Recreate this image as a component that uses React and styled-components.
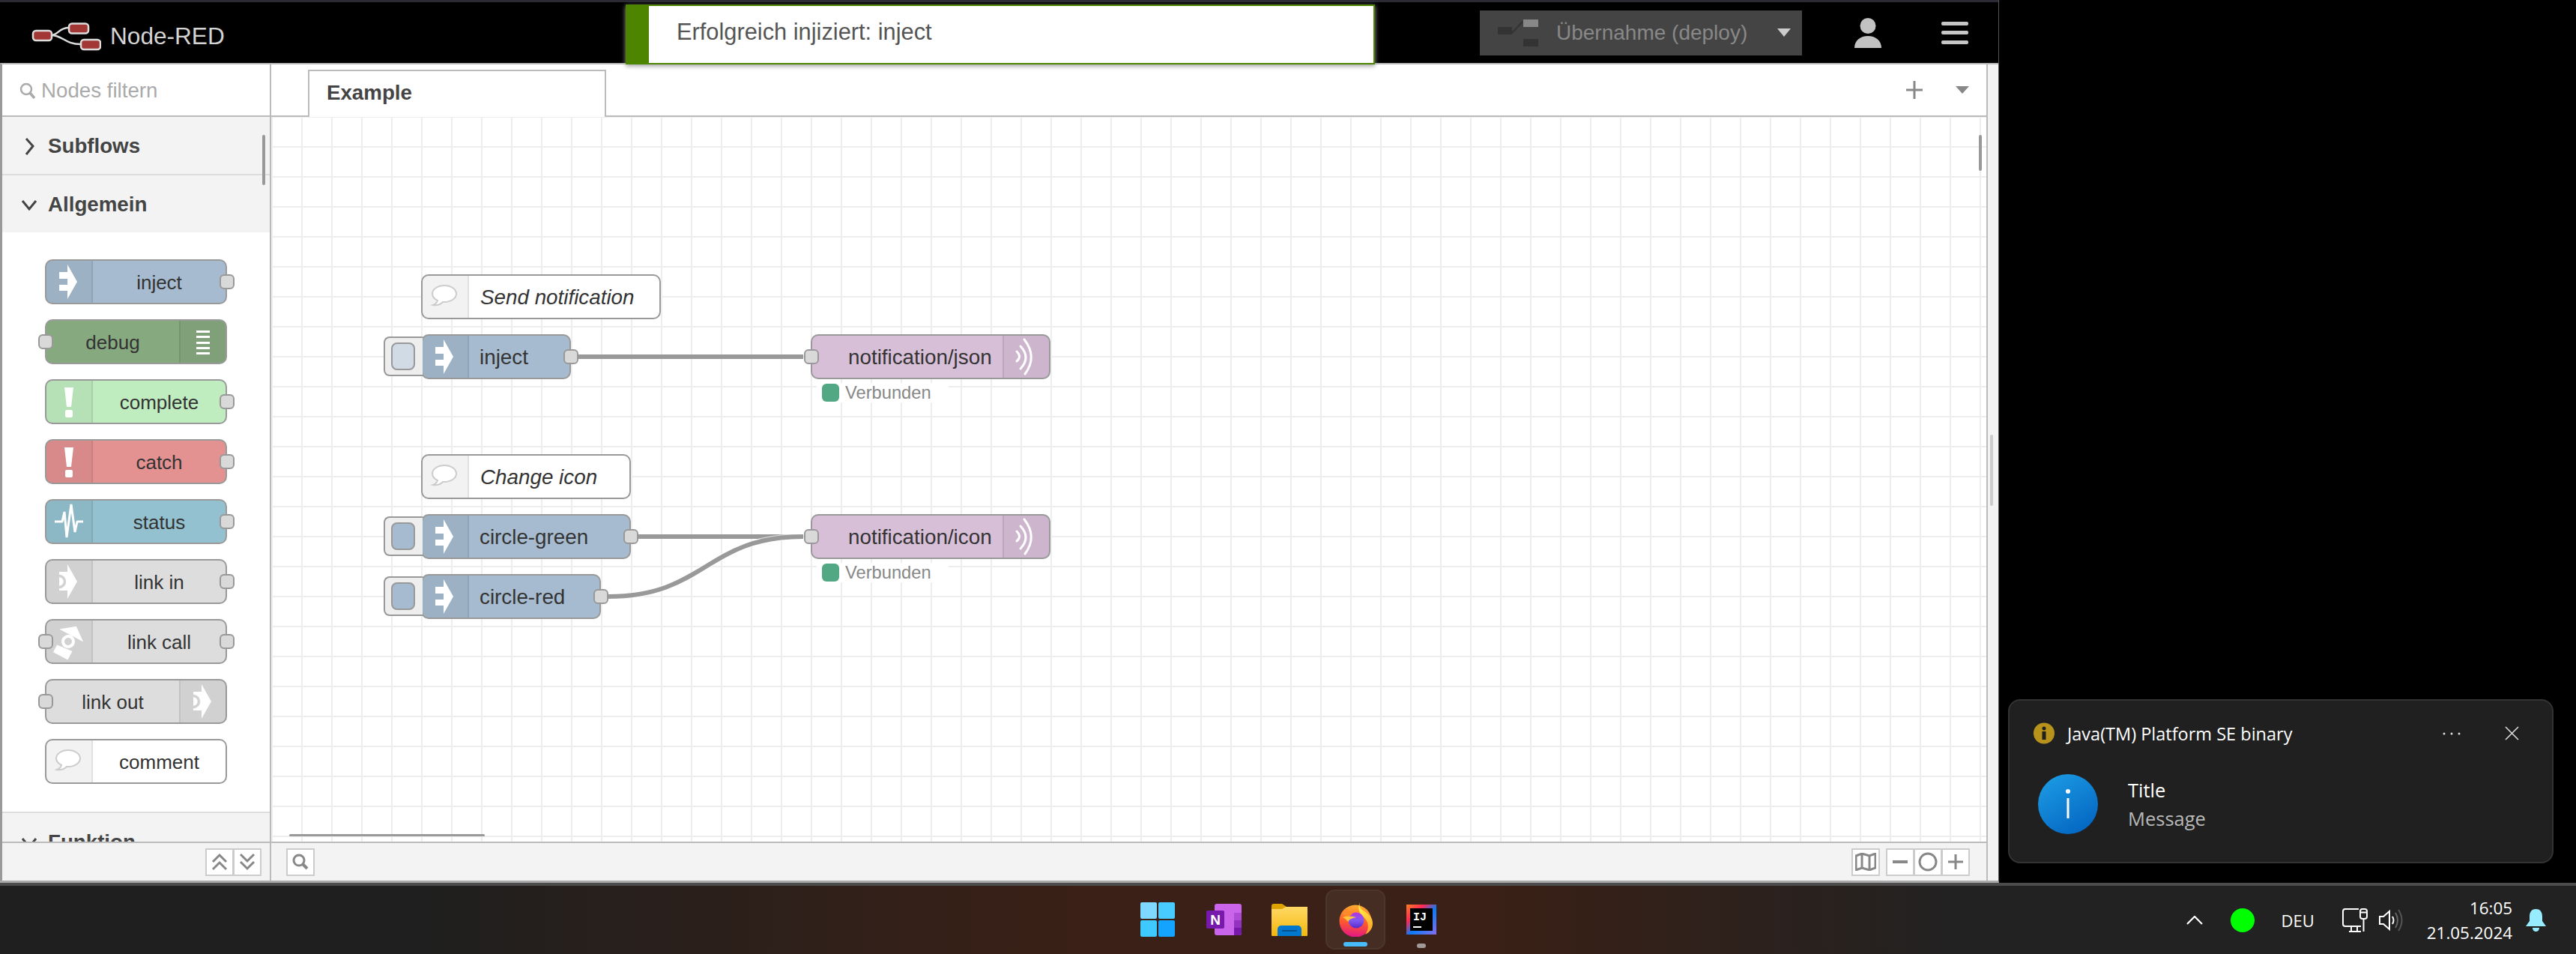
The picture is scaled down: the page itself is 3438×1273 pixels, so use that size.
import React from "react";
import styled, { createGlobalStyle, css } from "styled-components";

const GlobalStyle = createGlobalStyle`
  html, body {
    margin: 0;
    padding: 0;
    background: #000;
    overflow: hidden;
  }
  body {
    font-family: "Liberation Sans", Arial, sans-serif;
  }
`;

const WIN_FONT = `"Open Sans", "Noto Sans", sans-serif`;

const Desktop = styled.div`
  width: 3438px;
  height: 1273px;
  display: flex;
  flex-direction: column;
  background: #000;
`;

const DesktopRow = styled.div`
  flex: 1;
  min-height: 0;
  display: flex;
`;

const AppWindow = styled.div`
  width: 2668px;
  flex-shrink: 0;
  display: flex;
  flex-direction: column;
  background: #f3f3f3;
  border-right: 1px solid #555;
  box-sizing: border-box;
  border-bottom: 3px solid #aaa;
`;

const TopStrip = styled.div`
  height: 3px;
  flex-shrink: 0;
  background: #2b2b35;
`;

const Header = styled.header`
  position: relative;
  height: 81px;
  flex-shrink: 0;
  display: flex;
  align-items: center;
  padding-right: 40px;
  background: #000;
`;

const Brand = styled.div`
  display: flex;
  align-items: center;
  gap: 12px;
  padding: 10px 0 0 40px;
  font-size: 31.6px;
  color: #d4d4d4;
`;

const Toast = styled.div`
  position: absolute;
  z-index: 10;
  left: 835px;
  top: 3px;
  width: 1000px;
  height: 80px;
  box-sizing: border-box;
  display: flex;
  align-items: center;
  padding-left: 37px;
  padding-bottom: 6px;
  background: #fff;
  border: 2px solid #4d8400;
  border-left-width: 31px;
  box-shadow: 0 2px 6px #999;
  font-size: 30.8px;
  color: #555;
`;

const DeployButton = styled.div`
  margin-left: auto;
  width: 430px;
  height: 60px;
  box-sizing: border-box;
  display: flex;
  align-items: center;
  padding-left: 24px;
  background: #444;
  color: #888;
  font-size: 28px;
  white-space: nowrap;
`;

const DeployLabel = styled.span`
  margin-left: 24px;
  margin-right: 40px;
`;

const HeaderIcon = styled.svg`
  display: block;
  flex-shrink: 0;
  margin-left: ${({ $gap }) => $gap}px;
`;

const AppBody = styled.div`
  flex: 1;
  min-height: 0;
  display: flex;
  border-top: 2px solid #bbb;
  border-left: 3px solid #999;
`;

const Palette = styled.aside`
  width: 359px;
  flex-shrink: 0;
  box-sizing: border-box;
  display: flex;
  flex-direction: column;
  background: #fff;
  border-right: 2px solid #bbb;
`;

const PaletteSearch = styled.div`
  height: 70px;
  flex-shrink: 0;
  box-sizing: border-box;
  display: flex;
  align-items: center;
  gap: 7px;
  padding: 2px 0 0 23px;
  border-bottom: 2px solid #bbb;
  color: #aaa;
  font-size: 27.7px;
`;

const PaletteScroll = styled.div`
  position: relative;
  flex: 1;
  min-height: 0;
  overflow: hidden;
`;

const ScrollThumb = styled.div`
  position: absolute;
  background: #999;
  border-radius: 2px;
  left: ${({ $x }) => $x}px;
  top: ${({ $y }) => $y}px;
  width: ${({ $w }) => $w}px;
  height: ${({ $h }) => $h}px;
`;

const CategoryHeader = styled.div`
  height: 76px;
  box-sizing: border-box;
  display: flex;
  align-items: center;
  padding-top: 2px;
  background: #f3f3f3;
  color: #444;
  font-size: 27.7px;
  font-weight: bold;
  box-shadow: ${({ $line }) => ($line ? "0 2px 0 #ddd" : "none")};
  margin-bottom: ${({ $line }) => ($line ? "2px" : "0")};
`;

const CategoryChevron = styled.svg`
  width: 24px;
  height: 24px;
  margin: 0 13px 0 24px;
  flex-shrink: 0;
`;

const PaletteList = styled.div`
  display: flex;
  flex-direction: column;
  gap: 20px;
  padding: 36px 0 37px 57px;
  border-bottom: 2px solid #ddd;
`;

const nodeBase = css`
  box-sizing: border-box;
  height: 60px;
  display: flex;
  align-items: stretch;
  border: 2px solid #999;
  border-radius: 10px;
  background: ${({ $color }) => $color};
  color: #333;
  white-space: nowrap;
`;

const PaletteNode = styled.div`
  ${nodeBase}
  position: relative;
  width: 243px;
  font-size: 26px;
`;

const CanvasNode = styled.div`
  ${nodeBase}
  position: absolute;
  left: ${({ $x }) => $x}px;
  top: ${({ $y }) => $y}px;
  width: ${({ $w }) => $w}px;
  font-size: 27.8px;
  font-style: ${({ $italic }) => ($italic ? "italic" : "normal")};
`;

const IconCell = styled.div`
  width: 60px;
  flex-shrink: 0;
  background: rgba(0, 0, 0, 0.05);
  border-radius: ${({ $right }) => ($right ? "0 8px 8px 0" : "8px 0 0 8px")};
  ${({ $right }) =>
    $right
      ? "border-left: 2px solid rgba(0, 0, 0, 0.08);"
      : "border-right: 2px solid rgba(0, 0, 0, 0.08);"}
  svg {
    display: block;
  }
`;

const PaletteLabel = styled.div`
  flex: 1;
  text-align: center;
  line-height: 58px;
`;

const CanvasLabel = styled.div`
  flex: 1;
  line-height: 58px;
  padding-left: ${({ $pad }) => $pad}px;
`;

const Port = styled.div`
  position: absolute;
  top: 18px;
  width: 20px;
  height: 20px;
  box-sizing: border-box;
  background: #d9d9d9;
  border: 2px solid #999;
  border-radius: 6px;
  ${({ $side }) => ($side === "left" ? "left: -11px;" : "right: -12px;")}
`;

const InjectButton = styled.div`
  position: absolute;
  left: -52px;
  top: 1px;
  width: 52px;
  height: 53px;
  box-sizing: border-box;
  display: flex;
  align-items: center;
  padding-left: 8px;
  background: #eee;
  border: 2px solid #999;
  border-right: 0;
  border-radius: 8px 0 0 8px;
`;

const InjectKnob = styled.div`
  width: 32px;
  height: 37px;
  box-sizing: border-box;
  border: 2px solid #999;
  border-radius: 8px;
  background: ${({ $color }) => $color};
`;

const StatusRow = styled.div`
  position: absolute;
  left: ${({ $x }) => $x}px;
  top: ${({ $y }) => $y}px;
  width: 169px;
  height: 26px;
  display: flex;
  align-items: center;
  gap: 8px;
  background: rgba(255, 255, 255, 0.92);
  padding-left: 7px;
  color: #888;
  font-size: 23.7px;
`;

const StatusDot = styled.div`
  width: 23px;
  height: 24px;
  border-radius: 6px;
  background: #53a884;
`;

const Workspace = styled.main`
  flex: 1;
  min-width: 0;
  display: flex;
  flex-direction: column;
  background: #fff;
  border-right: 2px solid #bbb;
`;

const TabBar = styled.div`
  height: 70px;
  flex-shrink: 0;
  box-sizing: border-box;
  display: flex;
  align-items: flex-end;
  padding-left: 49px;
  border-bottom: 2px solid #bbb;
`;

const Tab = styled.div`
  width: 398px;
  height: 63px;
  margin-bottom: -2px;
  box-sizing: border-box;
  display: flex;
  align-items: center;
  padding: 0 0 4px 23px;
  background: #fff;
  border: 2px solid #bbb;
  border-bottom: 0;
  color: #444;
  font-size: 27.7px;
  font-weight: bold;
`;

const TabTools = styled.div`
  margin-left: auto;
  height: 68px;
  display: flex;
  align-items: center;
  gap: 44px;
  padding: 0 23px 0 0;
`;

const Canvas = styled.div`
  position: relative;
  flex: 1;
  min-height: 0;
  overflow: hidden;
  background-color: #fff;
  background-image:
    linear-gradient(to right, #eee 2px, transparent 2px),
    linear-gradient(to bottom, #eee 2px, transparent 2px);
  background-size: 40px 40px;
  background-position: 0 -1px;
`;

const Wires = styled.svg`
  position: absolute;
  left: 0;
  top: 0;
`;

const WorkspaceFooter = styled.div`
  height: 50px;
  flex-shrink: 0;
  display: flex;
  align-items: center;
  padding: 0 22px 0 20px;
  background: #f3f3f3;
  border-top: 2px solid #bbb;
`;

const PaletteFooter = styled(WorkspaceFooter)`
  justify-content: flex-end;
  padding: 0 11px 0 0;
`;

const FooterSpacer = styled.div`
  flex: 1;
`;

const ButtonGroup = styled.div`
  display: flex;
  margin-left: ${({ $gap }) => $gap || 0}px;
`;

const ToolButton = styled.div`
  width: 38px;
  height: 37px;
  box-sizing: border-box;
  display: flex;
  align-items: center;
  justify-content: center;
  background: #fff;
  border: 2px solid #ccc;
  & + & {
    margin-left: -1px;
  }
  svg {
    display: block;
    fill: none;
    stroke: #888;
    stroke-width: 3;
  }
`;

const SideStrip = styled.div`
  position: relative;
  width: 14px;
  flex-shrink: 0;
  background: #f3f3f3;
`;

const SideHandle = styled.div`
  position: absolute;
  left: 3px;
  top: 494px;
  width: 4px;
  height: 95px;
  background: #ccc;
  border-radius: 2px;
`;

const NotificationPane = styled.div`
  flex: 1;
  display: flex;
  align-items: flex-end;
  padding: 0 30px 26px 12px;
  background: #000;
`;

const Card = styled.div`
  width: 100%;
  height: 219px;
  box-sizing: border-box;
  background: #202020;
  border: 2px solid #333;
  border-radius: 16px;
  font-family: ${WIN_FONT};
`;

const CardHead = styled.div`
  height: 29px;
  margin-top: 29px;
  display: flex;
  align-items: center;
  padding: 0 44px 0 32px;
  color: #fff;
  font-size: 23.5px;
  svg {
    display: block;
    flex-shrink: 0;
  }
`;

const CardTitle = styled.span`
  margin-left: 17px;
  margin-right: auto;
`;

const CardBody = styled.div`
  display: flex;
  align-items: center;
  gap: 40px;
  margin-top: 40px;
  padding-left: 38px;
`;

const CardText = styled.div`
  display: flex;
  flex-direction: column;
  gap: 2px;
  font-size: 25.5px;
  line-height: 36px;
  color: #fff;
`;

const CardMessage = styled.span`
  color: #b8b8b8;
`;

const Taskbar = styled.footer`
  height: 95px;
  flex-shrink: 0;
  box-sizing: border-box;
  display: grid;
  grid-template-columns: 1505px 432px 1fr;
  border-top: 4px solid #4c4c4c;
  background: linear-gradient(
    90deg,
    #1f1f1f 0%,
    #1f1f1f 16%,
    #3a2016 42%,
    #3a2016 58%,
    #222 76%,
    #222 100%
  );
`;

const TaskIcons = styled.div`
  grid-column: 2;
  display: flex;
  gap: 8px;
  padding-top: 5px;
`;

const TaskSlot = styled.div`
  position: relative;
  width: 80px;
  height: 80px;
  box-sizing: border-box;
  display: flex;
  align-items: center;
  justify-content: center;
  border-radius: 12px;
  ${({ $active }) =>
    $active &&
    `background: rgba(255, 255, 255, 0.06);
     border: 2px solid rgba(255, 255, 255, 0.04);`}
`;

const TaskMark = styled.div`
  position: absolute;
  bottom: 2px;
  left: 50%;
  transform: translateX(-50%);
  width: ${({ $active }) => ($active ? 32 : 12)}px;
  height: 6px;
  border-radius: 3px;
  background: ${({ $active }) => ($active ? "#47bdfc" : "#a09a98")};
`;

const Tray = styled.div`
  grid-column: 3;
  display: flex;
  align-items: center;
  justify-content: flex-end;
  padding-right: 40px;
  color: #fff;
  font-family: ${WIN_FONT};
`;

const TrayItem = styled.div`
  margin-left: ${({ $gap }) => $gap}px;
  flex-shrink: 0;
  svg {
    display: block;
  }
`;

const TrayLang = styled(TrayItem)`
  font-size: 22px;
`;

const Clock = styled(TrayItem)`
  text-align: right;
  font-size: 22.4px;
  line-height: 33px;
`;

const ArrowIcon = () => (
  <svg width="58" height="56" viewBox="0 0 58 56">
    <path d="M17 15H28V5L41 28 28 51V40H17V32H28V24H17z" fill="#fff" />
  </svg>
);

const ExclaimIcon = () => (
  <svg width="58" height="56" viewBox="0 0 58 56">
    <path d="M24 9H36L33 35H27z" fill="#fff" />
    <rect x="25" y="39" width="10" height="10" rx="2" fill="#fff" />
  </svg>
);

const PulseIcon = () => (
  <svg width="58" height="56" viewBox="0 0 58 56">
    <path
      d="M11 28H21L24 15 27 49 33 5 38 42 41 28H49"
      fill="none"
      stroke="#fff"
      strokeWidth="3"
      strokeLinejoin="bevel"
    />
  </svg>
);

const LinkIcon = () => (
  <svg width="58" height="56" viewBox="0 0 58 56">
    <path d="M17 15H28V5L41 28 28 51V40H17z" fill="#fff" />
    <path d="M17 20.5a7.5 7.5 0 0 1 0 15" fill="none" stroke="#d2d2d2" strokeWidth="3.5" />
  </svg>
);

const LinkCallIcon = () => (
  <svg width="58" height="56" viewBox="0 0 58 56">
    <g transform="rotate(-62 29 28)">
      <path d="M7 17H18L20 39H7z" fill="#fff" />
      <circle cx="29" cy="28" r="9" fill="#fff" />
      <circle cx="29" cy="28" r="5" fill="#d2d2d2" />
      <path d="M38 21V10L52 28 38 46V35z" fill="#fff" />
    </g>
  </svg>
);

const BubbleIcon = () => (
  <svg width="58" height="56" viewBox="0 0 58 56">
    <path
      d="M29 13C20 13 13 18 13 24 13 28 16 31 20 33 19 36 17 38 14 39 19 40 24 38 27 35L29 35C38 35 45 30 45 24 45 18 38 13 29 13Z"
      fill="#fff"
      stroke="#ccc"
      strokeWidth="2"
    />
  </svg>
);

const DebugIcon = () => (
  <svg width="60" height="56" viewBox="0 0 60 56">
    {[13, 20, 28, 35, 42].map((y) => (
      <rect key={y} x="21" y={y} width="18" height="3" fill="#fff" />
    ))}
  </svg>
);

const WaveIcon = () => (
  <svg width="58" height="56" viewBox="0 0 58 56">
    <g fill="none" stroke="#fff" strokeWidth="3" strokeLinecap="round">
      <path d="M17 21Q24 28 17 34" />
      <path d="M22 14Q36 29 22 44" />
      <path d="M27 5Q45 28 28 51" />
    </g>
  </svg>
);

const LogoIcon = () => (
  <svg width="95" height="38" viewBox="0 0 95 38">
    <g fill="none" stroke="#ddd" strokeWidth="2.5">
      <path d="M28 17C38 17 38 7 52 7" />
      <path d="M28 17C44 17 46 29 68 29" />
    </g>
    <g fill="#a23735" stroke="#ddd" strokeWidth="2.5">
      <rect x="4" y="11" width="25" height="13" rx="4" />
      <rect x="52" y="1.5" width="26" height="13" rx="4" />
      <rect x="68" y="23" width="26" height="13" rx="4" />
    </g>
  </svg>
);

const DeployIcon = () => (
  <svg width="54" height="36" viewBox="0 0 54 36" style={{ flexShrink: 0 }}>
    <rect x="0" y="10" width="19" height="10" fill="#333" />
    <rect x="34" y="0" width="20" height="10" fill="#888" />
    <rect x="34" y="26" width="20" height="10" fill="#333" />
    <path d="M19 18L33 3" stroke="#333" strokeWidth="2" />
  </svg>
);

const Chevron = ({ open }) => (
  <CategoryChevron viewBox="0 0 24 24">
    <path
      d={open ? "M3 7L12 18 21 7" : "M8 2L17 12 8 23"}
      fill="none"
      stroke="#444"
      strokeWidth="3"
    />
  </CategoryChevron>
);

const SearchGlyph = () => (
  <svg width="22" height="22" viewBox="0 0 22 22" style={{ display: "block" }}>
    <circle cx="9" cy="9" r="7" fill="none" stroke="#aaa" strokeWidth="2.5" />
    <path d="M14 14L20 21" stroke="#aaa" strokeWidth="3.5" />
  </svg>
);

const paletteNodes = [
  { name: "inject", color: "#a6bbcf", Icon: ArrowIcon, ports: ["right"] },
  { name: "debug", color: "#87a980", Icon: DebugIcon, right: true, ports: ["left"] },
  { name: "complete", color: "#c0edc0", Icon: ExclaimIcon, ports: ["right"] },
  { name: "catch", color: "#e49191", Icon: ExclaimIcon, ports: ["right"] },
  { name: "status", color: "#94c1d0", Icon: PulseIcon, ports: ["right"] },
  { name: "link in", color: "#ddd", Icon: LinkIcon, ports: ["right"] },
  { name: "link call", color: "#ddd", Icon: LinkCallIcon, ports: ["left", "right"] },
  { name: "link out", color: "#ddd", Icon: LinkIcon, right: true, ports: ["left"] },
  { name: "comment", color: "#fff", Icon: BubbleIcon, ports: [] },
];

const WindowsLogo = () => (
  <svg width="46" height="46" viewBox="0 0 46 46">
    <rect x="0" y="0" width="22" height="22" rx="2" fill="#7fd8ff" />
    <rect x="24" y="0" width="22" height="22" rx="2" fill="#48ccff" />
    <rect x="0" y="24" width="22" height="22" rx="2" fill="#3ec9ff" />
    <rect x="24" y="24" width="22" height="22" rx="2" fill="#14a3ff" />
  </svg>
);

const OneNoteLogo = () => (
  <svg width="47" height="42" viewBox="0 0 47 42">
    <rect x="11" y="0" width="36" height="42" rx="3" fill="#ca64ea" />
    <rect x="37" y="12" width="10" height="10" fill="#ae4bd5" />
    <rect x="37" y="22" width="10" height="10" fill="#9332bf" />
    <path d="M37 32H47V39A3 3 0 0 1 44 42H37z" fill="#7719aa" />
    <rect x="0" y="9" width="24" height="24" rx="2" fill="#7719aa" />
    <text
      x="12"
      y="28"
      textAnchor="middle"
      fontFamily="'Liberation Sans', sans-serif"
      fontWeight="bold"
      fontSize="19"
      fill="#fff"
    >
      N
    </text>
  </svg>
);

const FolderLogo = () => (
  <svg width="48" height="43" viewBox="0 0 48 43">
    <defs>
      <linearGradient id="folderBody" x1="0" y1="0" x2="0" y2="1">
        <stop offset="0" stopColor="#ffd966" />
        <stop offset="1" stopColor="#f5b70a" />
      </linearGradient>
    </defs>
    <path d="M0 3A3 3 0 0 1 3 0H14L20 4H48V20H0z" fill="#dfa300" />
    <path d="M0 7H14L19 4H47A1 1 0 0 1 48 5V42A1 1 0 0 1 47 43H1A1 1 0 0 1 0 42z" fill="url(#folderBody)" />
    <path d="M8 43V34A5 5 0 0 1 13 29H35A5 5 0 0 1 40 34V43z" fill="#0078d0" />
    <rect x="14" y="35" width="20" height="2" fill="#0a4f8c" />
  </svg>
);

const FirefoxLogo = () => (
  <svg width="46" height="46" viewBox="0 0 46 46">
    <defs>
      <linearGradient id="foxBase" x1="0.6" y1="0" x2="0.5" y2="1">
        <stop offset="0" stopColor="#ffb02e" />
        <stop offset="0.55" stopColor="#ff5a2c" />
        <stop offset="1" stopColor="#e31587" />
      </linearGradient>
      <linearGradient id="foxFlame" x1="0.3" y1="0" x2="0.7" y2="1">
        <stop offset="0" stopColor="#fff24a" />
        <stop offset="1" stopColor="#ffa42a" />
      </linearGradient>
      <linearGradient id="foxCore" x1="0.5" y1="0" x2="0.5" y2="1">
        <stop offset="0" stopColor="#b833e1" />
        <stop offset="0.5" stopColor="#7f5bf0" />
        <stop offset="1" stopColor="#592acb" />
      </linearGradient>
    </defs>
    <circle cx="23" cy="25" r="21.5" fill="url(#foxBase)" />
    <path d="M29 0C27 6 30 9 35 12 41 16 46 20 46 28 46 35 42 40 36 43 42 35 41 25 33 19 27 14 26 6 29 0Z" fill="url(#foxFlame)" />
    <circle cx="24" cy="24" r="10.5" fill="url(#foxCore)" />
    <path d="M6 14C8 11 10 9 12 8 11 12 13 13 17 12 15 14 16 15 19 15 17 18 14 19 10 19 8 18 7 16 6 14Z" fill="#ff8a2c" />
    <path d="M6 20C12 18 20 19 24 20 20 21 15 22 13 26 11 23 8 21 6 20Z" fill="#ffc43a" />
  </svg>
);

const IdeaLogo = () => (
  <svg width="40" height="40" viewBox="0 0 40 40">
    <defs>
      <linearGradient id="ideaRim" x1="0" y1="0" x2="1" y2="1">
        <stop offset="0" stopColor="#fc801d" />
        <stop offset="0.3" stopColor="#fe2857" />
        <stop offset="0.55" stopColor="#087cfa" />
        <stop offset="1" stopColor="#8a6cf0" />
      </linearGradient>
    </defs>
    <rect width="40" height="40" fill="url(#ideaRim)" />
    <rect x="5" y="5" width="30" height="30" fill="#000" />
    <text
      x="9"
      y="21"
      fontFamily="'Liberation Mono', monospace"
      fontWeight="bold"
      fontSize="15"
      fill="#fff"
    >
      IJ
    </text>
    <rect x="9" y="29" width="11" height="2" fill="#fff" />
  </svg>
);

const App = () => (
  <Desktop>
    <GlobalStyle />
    <DesktopRow>
      <AppWindow>
        <TopStrip />
        <Header>
          <Brand>
            <LogoIcon />
            <span>Node-RED</span>
          </Brand>
          <Toast>Erfolgreich injiziert: inject</Toast>
          <DeployButton>
            <DeployIcon />
            <DeployLabel>Übernahme (deploy)</DeployLabel>
            <svg width="18" height="11" viewBox="0 0 18 11">
              <path d="M0 0H18L9 11z" fill="#ccc" />
            </svg>
          </DeployButton>
          <HeaderIcon $gap={70} width="36" height="40" viewBox="0 0 36 40">
            <ellipse cx="18" cy="10.5" rx="10.5" ry="10.5" fill="#c2c2c2" />
            <path d="M0 40C0 30 8 24 18 24 28 24 36 30 36 40z" fill="#c2c2c2" />
          </HeaderIcon>
          <HeaderIcon $gap={80} width="36" height="30" viewBox="0 0 36 30">
            <rect x="0" y="0" width="36" height="5" rx="2" fill="#c6c6c6" />
            <rect x="0" y="12" width="36" height="5" rx="2" fill="#c6c6c6" />
            <rect x="0" y="25" width="36" height="5" rx="2" fill="#c6c6c6" />
          </HeaderIcon>
        </Header>
        <AppBody>
          <Palette>
            <PaletteSearch>
              <SearchGlyph />
              <span>Nodes filtern</span>
            </PaletteSearch>
            <PaletteScroll>
              <CategoryHeader $line>
                <Chevron />
                Subflows
              </CategoryHeader>
              <CategoryHeader>
                <Chevron open />
                Allgemein
              </CategoryHeader>
              <PaletteList>
                {paletteNodes.map(({ name, color, Icon, right, ports }) => (
                  <PaletteNode key={name} $color={color}>
                    {!right && (
                      <IconCell>
                        <Icon />
                      </IconCell>
                    )}
                    <PaletteLabel>{name}</PaletteLabel>
                    {right && (
                      <IconCell $right>
                        <Icon />
                      </IconCell>
                    )}
                    {ports.map((side) => (
                      <Port key={side} $side={side} />
                    ))}
                  </PaletteNode>
                ))}
              </PaletteList>
              <CategoryHeader>
                <Chevron open />
                Funktion
              </CategoryHeader>
              <ScrollThumb $x={347} $y={24} $w={4} $h={67} />
            </PaletteScroll>
            <PaletteFooter>
              <ToolButton>
                <svg width="22" height="24" viewBox="0 0 22 24">
                  <path d="M2 12L11 3 20 12M2 22L11 13 20 22" />
                </svg>
              </ToolButton>
              <ToolButton>
                <svg width="22" height="24" viewBox="0 0 22 24">
                  <path d="M2 2L11 11 20 2M2 12L11 21 20 12" />
                </svg>
              </ToolButton>
            </PaletteFooter>
          </Palette>
          <Workspace>
            <TabBar>
              <Tab>Example</Tab>
              <TabTools>
                <svg width="22" height="24" viewBox="0 0 22 24">
                  <path d="M11 0V24M0 12H22" stroke="#888" strokeWidth="3" />
                </svg>
                <svg width="18" height="10" viewBox="0 0 18 10">
                  <path d="M0 0H18L9 10z" fill="#888" />
                </svg>
              </TabTools>
            </TabBar>
            <Canvas>
              <Wires width="2290" height="967">
                <g fill="none">
                  <path d="M410 320H710" stroke="#999" strokeWidth="6" />
                  <path d="M490 560H710" stroke="#999" strokeWidth="6" />
                  <path d="M450 640C580 640 580 560 710 560" stroke="#fff" strokeWidth="8.5" opacity="0.6" />
                  <path d="M450 640C580 640 580 560 710 560" stroke="#999" strokeWidth="6" />
                </g>
              </Wires>

              <CanvasNode $x={200} $y={210} $w={320} $color="#fff" $italic>
                <IconCell>
                  <BubbleIcon />
                </IconCell>
                <CanvasLabel $pad={15}>Send notification</CanvasLabel>
              </CanvasNode>
              <CanvasNode $x={200} $y={290} $w={200} $color="#a6bbcf">
                <InjectButton>
                  <InjectKnob $color="#d1dbe6" />
                </InjectButton>
                <IconCell>
                  <ArrowIcon />
                </IconCell>
                <CanvasLabel $pad={14}>inject</CanvasLabel>
                <Port $side="right" />
              </CanvasNode>
              <CanvasNode $x={720} $y={290} $w={320} $color="#d8bfd8">
                <CanvasLabel $pad={48}>notification/json</CanvasLabel>
                <IconCell $right>
                  <WaveIcon />
                </IconCell>
                <Port $side="left" />
              </CanvasNode>
              <StatusRow $x={728} $y={355}>
                <StatusDot />
                Verbunden
              </StatusRow>

              <CanvasNode $x={200} $y={450} $w={280} $color="#fff" $italic>
                <IconCell>
                  <BubbleIcon />
                </IconCell>
                <CanvasLabel $pad={15}>Change icon</CanvasLabel>
              </CanvasNode>
              <CanvasNode $x={200} $y={530} $w={280} $color="#a6bbcf">
                <InjectButton>
                  <InjectKnob $color="#a6bbcf" />
                </InjectButton>
                <IconCell>
                  <ArrowIcon />
                </IconCell>
                <CanvasLabel $pad={14}>circle-green</CanvasLabel>
                <Port $side="right" />
              </CanvasNode>
              <CanvasNode $x={200} $y={610} $w={240} $color="#a6bbcf">
                <InjectButton>
                  <InjectKnob $color="#a6bbcf" />
                </InjectButton>
                <IconCell>
                  <ArrowIcon />
                </IconCell>
                <CanvasLabel $pad={14}>circle-red</CanvasLabel>
                <Port $side="right" />
              </CanvasNode>
              <CanvasNode $x={720} $y={530} $w={320} $color="#d8bfd8">
                <CanvasLabel $pad={48}>notification/icon</CanvasLabel>
                <IconCell $right>
                  <WaveIcon />
                </IconCell>
                <Port $side="left" />
              </CanvasNode>
              <StatusRow $x={728} $y={595}>
                <StatusDot />
                Verbunden
              </StatusRow>

              <ScrollThumb $x={2279} $y={24} $w={4} $h={48} />
              <ScrollThumb $x={24} $y={957} $w={261} $h={3} />
            </Canvas>
            <WorkspaceFooter>
              <ToolButton>
                <svg width="22" height="22" viewBox="0 0 22 22">
                  <circle cx="9" cy="9" r="7" />
                  <path d="M14 14L20 20" strokeWidth="4" />
                </svg>
              </ToolButton>
              <FooterSpacer />
              <ButtonGroup>
                <ToolButton>
                  <svg width="28" height="24" viewBox="0 0 28 24">
                    <path d="M1 4L9 1 19 4 27 1V20L19 23 9 20 1 23zM9 1V20M19 4V23" />
                  </svg>
                </ToolButton>
              </ButtonGroup>
              <ButtonGroup $gap={8}>
                <ToolButton>
                  <svg width="22" height="6" viewBox="0 0 22 6">
                    <path d="M1 3H21" strokeWidth="4" />
                  </svg>
                </ToolButton>
                <ToolButton>
                  <svg width="26" height="26" viewBox="0 0 26 26">
                    <circle cx="13" cy="13" r="11" />
                  </svg>
                </ToolButton>
                <ToolButton>
                  <svg width="22" height="22" viewBox="0 0 22 22">
                    <path d="M1 11H21M11 1V21" />
                  </svg>
                </ToolButton>
              </ButtonGroup>
            </WorkspaceFooter>
          </Workspace>
          <SideStrip>
            <SideHandle />
          </SideStrip>
        </AppBody>
      </AppWindow>
      <NotificationPane>
        <Card>
          <CardHead>
            <svg width="28" height="29" viewBox="0 0 28 29">
              <circle cx="14" cy="14.5" r="14" fill="#b8931c" />
              <circle cx="14" cy="8" r="2.5" fill="#202020" />
              <rect x="11.5" y="12" width="5" height="11" fill="#202020" />
            </svg>
            <CardTitle>Java(TM) Platform SE binary</CardTitle>
            <svg width="24" height="4" viewBox="0 0 24 4">
              <circle cx="2" cy="2" r="1.5" fill="#ddd" />
              <circle cx="12" cy="2" r="1.5" fill="#ddd" />
              <circle cx="22" cy="2" r="1.5" fill="#ddd" />
            </svg>
            <svg width="19" height="19" viewBox="0 0 19 19" style={{ marginLeft: 59 }}>
              <path d="M1 1L18 18M18 1L1 18" stroke="#ddd" strokeWidth="1.6" />
            </svg>
          </CardHead>
          <CardBody>
            <svg width="80" height="80" viewBox="0 0 80 80">
              <defs>
                <linearGradient id="infoFill" x1="0" y1="0" x2="0.6" y2="1">
                  <stop offset="0" stopColor="#1e9fe6" />
                  <stop offset="1" stopColor="#0569c4" />
                </linearGradient>
              </defs>
              <circle cx="40" cy="40" r="40" fill="url(#infoFill)" />
              <circle cx="40" cy="23" r="3" fill="#fff" />
              <rect x="38.5" y="32" width="3" height="27" fill="#fff" />
            </svg>
            <CardText>
              <span>Title</span>
              <CardMessage>Message</CardMessage>
            </CardText>
          </CardBody>
        </Card>
      </NotificationPane>
    </DesktopRow>
    <Taskbar>
      <TaskIcons>
        <TaskSlot>
          <WindowsLogo />
        </TaskSlot>
        <TaskSlot>
          <OneNoteLogo />
        </TaskSlot>
        <TaskSlot>
          <FolderLogo />
        </TaskSlot>
        <TaskSlot $active>
          <FirefoxLogo />
          <TaskMark $active />
        </TaskSlot>
        <TaskSlot>
          <IdeaLogo />
          <TaskMark />
        </TaskSlot>
      </TaskIcons>
      <Tray>
        <TrayItem $gap={0}>
          <svg width="22" height="12" viewBox="0 0 22 12">
            <path d="M1 11L11 1 21 11" fill="none" stroke="#fff" strokeWidth="2.2" />
          </svg>
        </TrayItem>
        <TrayItem $gap={37}>
          <svg width="32" height="32" viewBox="0 0 32 32">
            <circle cx="16" cy="16" r="16" fill="#0f0" />
          </svg>
        </TrayItem>
        <TrayLang $gap={36}>DEU</TrayLang>
        <TrayItem $gap={37}>
          <svg width="35" height="32" viewBox="0 0 35 32">
            <g fill="none" stroke="#fff" strokeWidth="2">
              <path d="M22 1H4A3 3 0 0 0 1 4V21A3 3 0 0 0 4 24H25" />
              <rect x="24" y="1" width="9" height="13" rx="3" />
              <path d="M28.5 14V31M9 31H25M12 24V31M20 24V31M25 5.5H32" />
            </g>
          </svg>
        </TrayItem>
        <TrayItem $gap={14}>
          <svg width="32" height="30" viewBox="0 0 32 30">
            <path d="M1 10H6L14 3V27L6 20H1z" fill="none" stroke="#fff" strokeWidth="2" />
            <path d="M18 10Q21 15 18 20" fill="none" stroke="#fff" strokeWidth="2" />
            <path d="M22 5Q28 15 22 25" fill="none" stroke="#666" strokeWidth="2" />
            <path d="M26 1Q35 15 26 29" fill="none" stroke="#555" strokeWidth="2" />
          </svg>
        </TrayItem>
        <Clock $gap={32}>
          <div>16:05</div>
          <div>21.05.2024</div>
        </Clock>
        <TrayItem $gap={18}>
          <svg width="27" height="30" viewBox="0 0 27 30">
            <path d="M13.5 0C7 0 5 5 5 10V16L0 23H27L22 16V10C22 5 20 0 13.5 0Z" fill="#98ecff" />
            <path d="M9 25H18C18 28 16 30 13.5 30 11 30 9 28 9 25Z" fill="#98ecff" />
          </svg>
        </TrayItem>
      </Tray>
    </Taskbar>
  </Desktop>
);

export default App;
